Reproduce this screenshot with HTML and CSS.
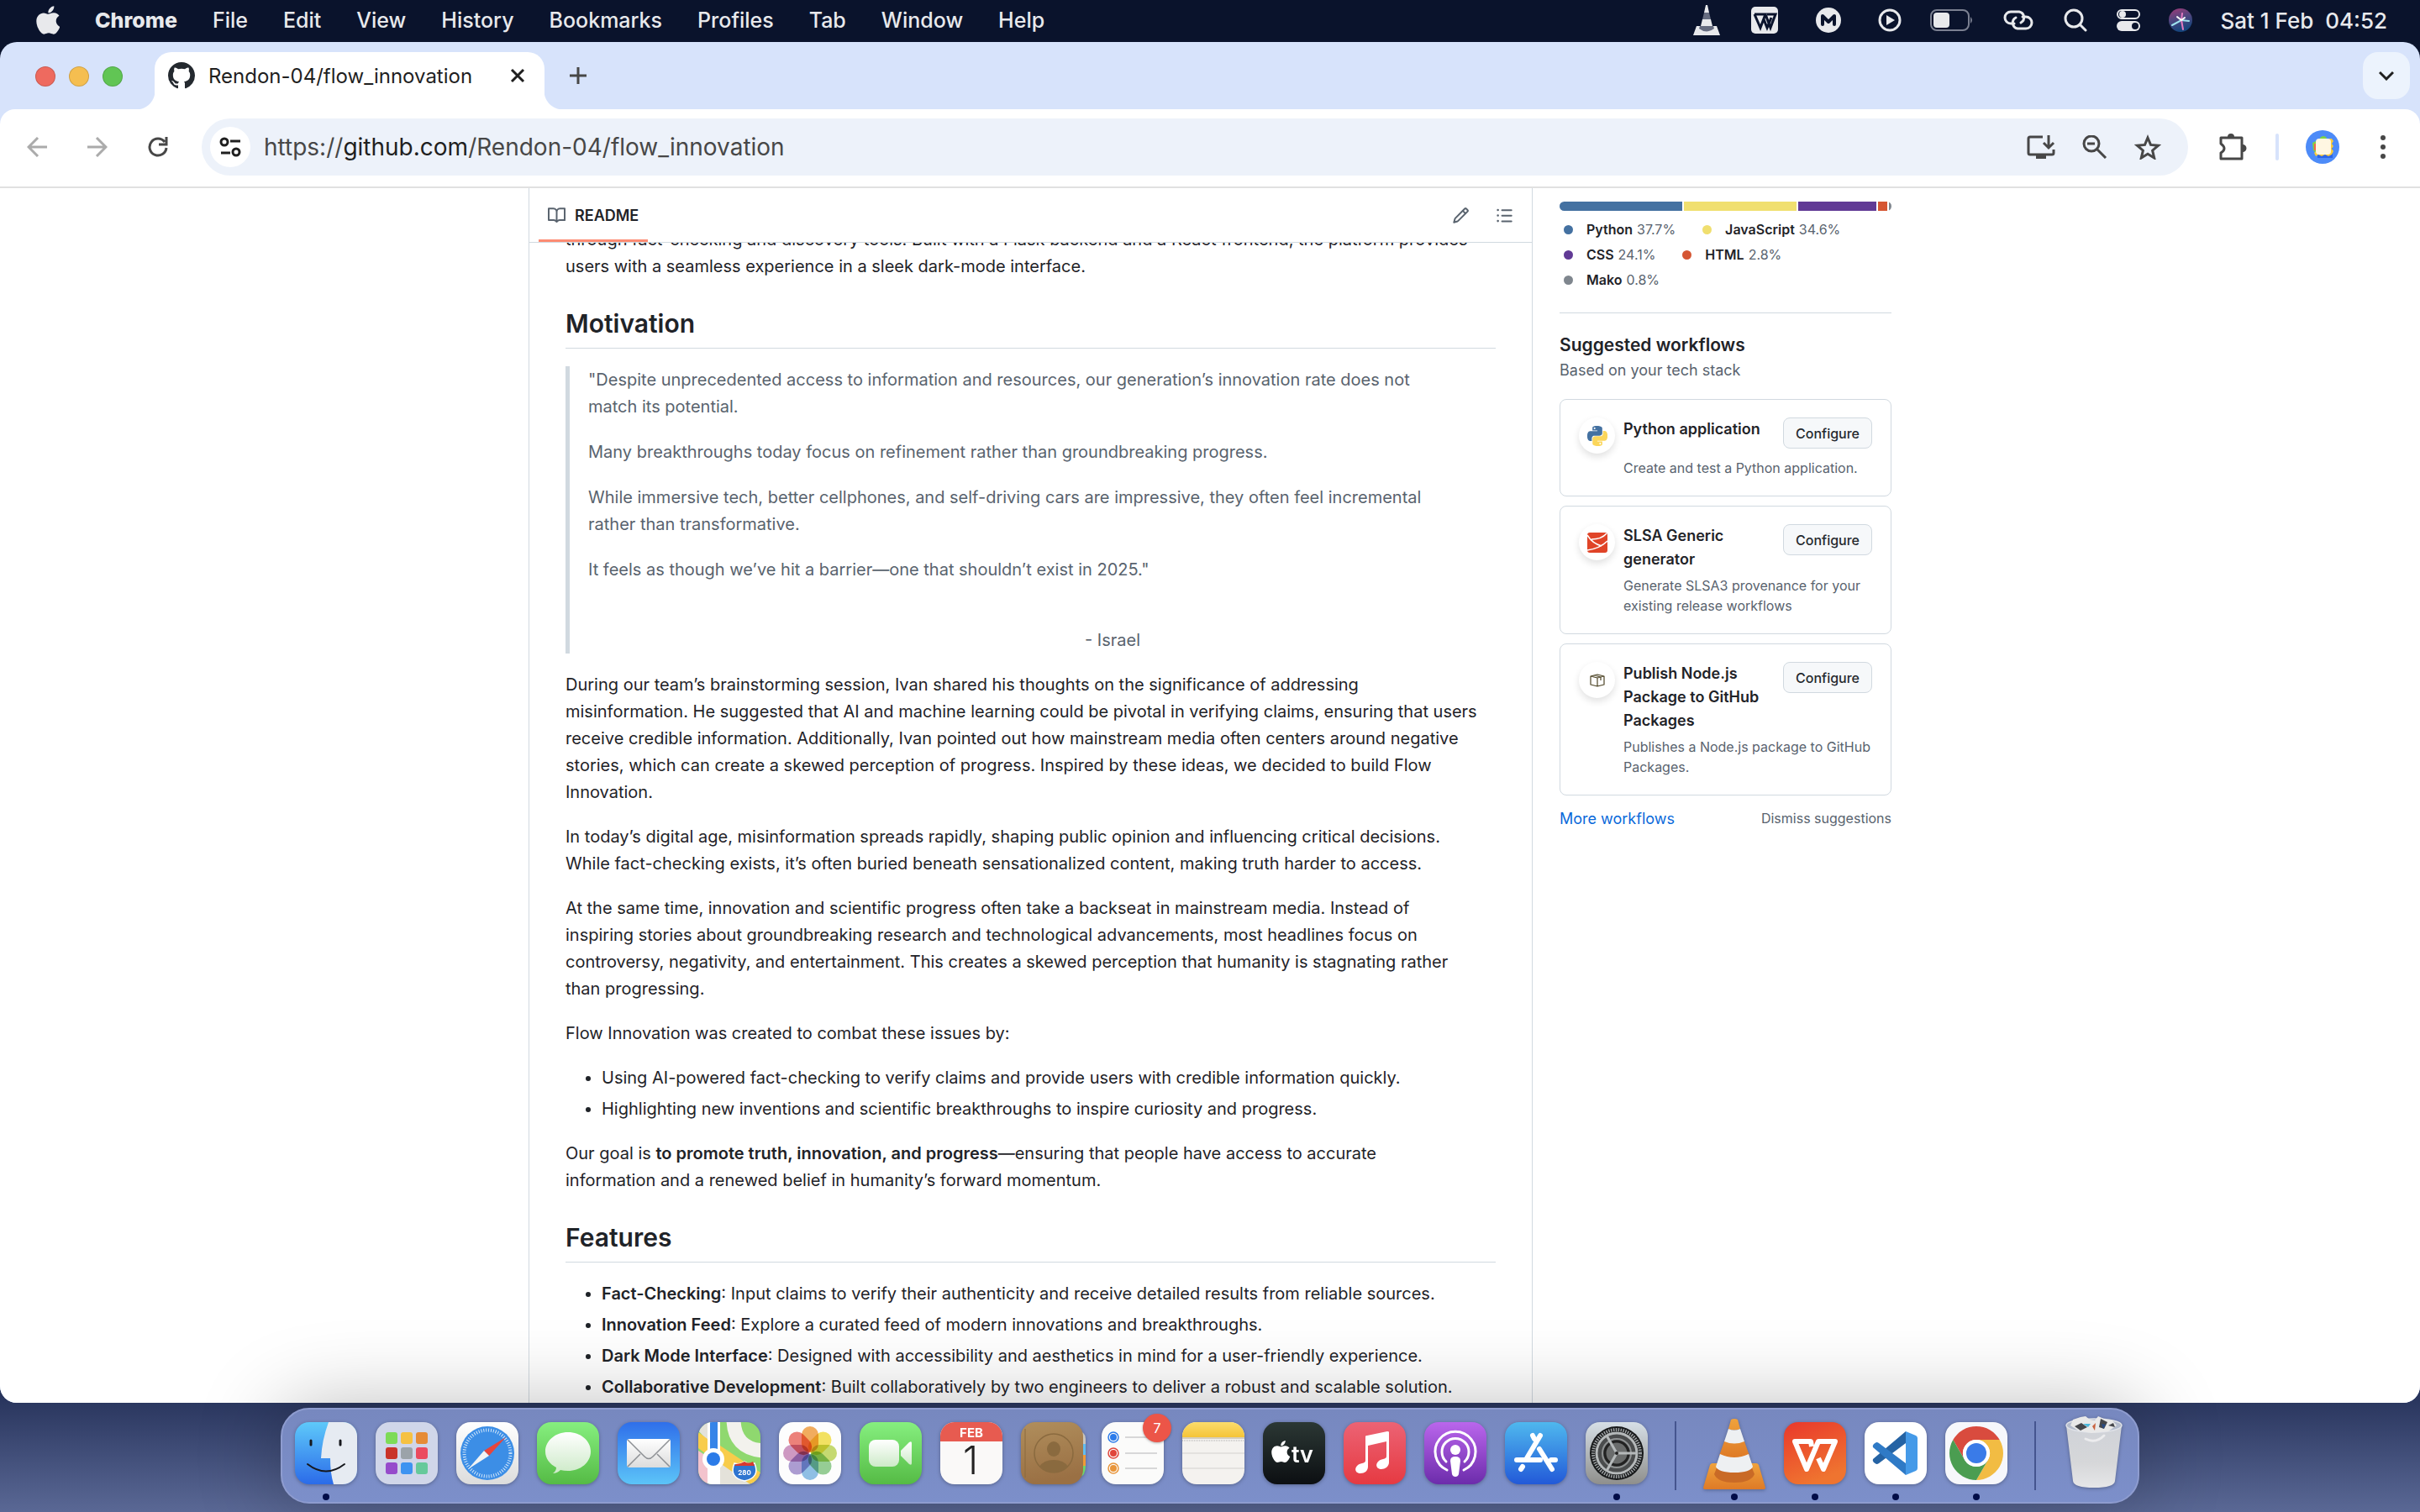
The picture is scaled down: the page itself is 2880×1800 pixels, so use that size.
FILE: index.html
```html
<!DOCTYPE html>
<html lang="en">
<head>
    <meta charset="UTF-8">
    <meta name="viewport" content="width=device-width, initial-scale=1.0">
    <title>Rendon-04/flow_innovation</title>
    <link rel="stylesheet" href="styles.css">
</head>
<body>
    <!-- Menu bar -->
    <header class="menubar">
        <nav class="menus">
            <button class="apple" aria-label="Apple menu">
                <svg width="28" height="36" viewBox="0 24 376 464"><path fill="currentColor" d="M318.7 268.7c-.2-36.7 16.4-64.4 50-84.8-18.8-26.9-47.2-41.7-84.7-44.6-35.5-2.8-74.3 20.7-88.5 20.7-15 0-49.4-19.7-76.4-19.7C63.3 141.2 4 184.8 4 273.5q0 39.3 14.4 81.2c12.8 36.7 59 126.7 107.2 125.2 25.2-.6 43-17.9 75.8-17.9 31.8 0 48.3 17.9 76.4 17.9 48.6-.7 90.4-82.5 102.6-119.3-65.2-30.7-61.7-90-61.7-91.9zm-56.6-164.2c27.3-32.4 24.8-61.9 24-72.5-24.1 1.4-52 16.4-67.9 34.9-17.5 19.8-27.8 44.3-25.6 71.9 26.1 2 49.9-11.4 69.5-34.3z"/></svg>
            </button>
            <button class="app-name">Chrome</button>
            <button>File</button>
            <button>Edit</button>
            <button>View</button>
            <button>History</button>
            <button>Bookmarks</button>
            <button>Profiles</button>
            <button>Tab</button>
            <button>Window</button>
            <button>Help</button>
        </nav>
        <div class="status">
            <svg width="36" height="38" viewBox="0 0 36 38"><path fill="#e8e9ec" d="M17 1h2l2 9h-6zM13 18h10l2 8q-7 4-14 0zM6 26h4q8 8 16 0h4l4 11H2z"/><path fill="#666c80" d="M15 10h6l2 8H13zM10 26h16l1 3q-9 7-18 0z"/></svg>
            <svg width="34" height="34" viewBox="0 0 34 34"><rect x="1" y="1" width="32" height="32" rx="5" fill="#e8e9ec"/><path fill="none" stroke="#0a132c" stroke-width="3" d="M5 10h13l-6 16L5 10M18 10l6 16 6-16H20M16 16l4 10 5-12"/></svg>
            <svg width="50" height="32" viewBox="0 0 50 32"><circle cx="25" cy="16" r="15" fill="#e8e9ec"/><path fill="none" stroke="#0a132c" stroke-width="4" stroke-linejoin="round" stroke-linecap="round" d="M18 21V11l7 7 7-7v10"/></svg>
            <svg width="28" height="28" viewBox="0 0 28 28"><circle cx="14" cy="14" r="12" fill="none" stroke="#e8e9ec" stroke-width="3"/><path fill="#e8e9ec" d="M10 8l10 6-10 6z"/></svg>
            <svg width="52" height="26" viewBox="0 0 52 26"><rect x="1" y="1" width="45" height="24" rx="7" fill="none" stroke="#7b8091" stroke-width="2"/><rect x="4" y="4" width="19" height="18" rx="4" fill="#e8e9ec"/><path fill="#7b8091" d="M48 9q4 4 0 8z"/></svg>
            <svg width="38" height="24" viewBox="0 0 38 24"><g fill="none" stroke="#e8e9ec" stroke-width="3" stroke-linecap="round"><path d="M14 16H10a7 7 0 0 1 0-14h10a7 7 0 0 1 2 13"/><path d="M24 8h4a7 7 0 0 1 0 14H18a7 7 0 0 1-2-13"/></g></svg>
            <svg width="30" height="28" viewBox="0 0 30 28"><g fill="none" stroke="#e8e9ec" stroke-width="3" stroke-linecap="round"><circle cx="13" cy="12" r="10"/><path d="M20 19l7 7"/></g></svg>
            <svg width="28" height="28" viewBox="0 0 28 28"><rect x="1" y="2" width="26" height="10" rx="5" fill="none" stroke="#e8e9ec" stroke-width="2"/><circle cx="7" cy="7" r="4" fill="#e8e9ec"/><rect x="0" y="15" width="28" height="12" rx="6" fill="#e8e9ec"/><circle cx="22" cy="21" r="4" fill="#0a132c"/></svg>
            <svg width="28" height="28" viewBox="0 0 28 28">
                <defs><linearGradient id="siri" x1="0" y1="0" x2="0.3" y2="1"><stop offset="0" stop-color="#a23a78"/><stop offset="0.5" stop-color="#50467f"/><stop offset="1" stop-color="#16457d"/></linearGradient></defs>
                <circle cx="14" cy="14" r="14" fill="url(#siri)"/><g fill="none" stroke-linecap="round" stroke-width="2"><path stroke="#9fe3ef" d="M4 20l11-6 9 1"/><path stroke="#e37ac0" d="M16 6l-1 8 2 11"/><path stroke="#fff" d="M10 10l5 4 4-3"/></g>
            </svg>
            <time class="clock">Sat 1 Feb&nbsp; 04:52</time>
        </div>
    </header>

    <!-- Browser window -->
    <div class="window">
        <div class="tabstrip">
            <div class="lights">
                <button class="light red" aria-label="Close window"></button>
                <button class="light yellow" aria-label="Minimise window"></button>
                <button class="light green" aria-label="Full screen"></button>
            </div>
            <div class="tab">
                <svg width="32" height="32" viewBox="0 0 16 16"><path fill="#24292f" d="M8 0c4.42 0 8 3.58 8 8a8.013 8.013 0 0 1-5.45 7.59c-.4.08-.55-.17-.55-.38 0-.27.01-1.13.01-2.2 0-.75-.25-1.23-.54-1.48 1.78-.2 3.65-.88 3.65-3.95 0-.88-.31-1.59-.82-2.15.08-.2.36-1.02-.08-2.12 0 0-.67-.22-2.2.82-.64-.18-1.32-.27-2-.27-.68 0-1.36.09-2 .27-1.53-1.03-2.2-.82-2.2-.82-.44 1.1-.16 1.92-.08 2.12-.51.56-.82 1.28-.82 2.15 0 3.06 1.86 3.75 3.64 3.95-.23.2-.44.55-.51 1.07-.46.21-1.61.55-2.33-.66-.15-.24-.6-.83-1.23-.82-.67.01-.27.38.01.53.34.19.73.9.82 1.13.16.45.68 1.31 2.69.94 0 .67.01 1.3.01 1.49 0 .21-.15.45-.55.38A7.995 7.995 0 0 1 0 8c0-4.42 3.58-8 8-8Z"/></svg>
                <span class="tab-title">Rendon-04/flow_innovation</span>
                <button class="icon-btn" aria-label="Close tab">
                    <svg width="20" height="20" viewBox="0 0 20 20"><path fill="none" stroke="#1f1f1f" stroke-width="3" d="M3 3l14 14M17 3L3 17"/></svg>
                </button>
            </div>
            <button class="icon-btn new-tab" aria-label="New tab">
                <svg width="20" height="20" viewBox="0 0 20 20"><path fill="none" stroke="#474747" stroke-width="3" d="M10 0v20M0 10h20"/></svg>
            </button>
            <button class="icon-btn tab-search" aria-label="Search tabs">
                <svg width="18" height="12" viewBox="0 0 18 12"><path fill="none" stroke="#1f1f1f" stroke-width="3" d="M1 2l8 8 8-8"/></svg>
            </button>
        </div>

        <div class="toolbar">
            <div class="nav-buttons">
                <button class="icon-btn" aria-label="Back">
                    <svg width="24" height="24" viewBox="0 0 24 24"><path fill="none" stroke="#ababab" stroke-width="3" d="M24 12H2M13 1L2 12l11 11"/></svg>
                </button>
                <button class="icon-btn" aria-label="Forward">
                    <svg width="24" height="24" viewBox="0 0 24 24"><path fill="none" stroke="#ababab" stroke-width="3" d="M0 12h22M11 1l11 11-11 11"/></svg>
                </button>
                <button class="icon-btn" aria-label="Reload">
                    <svg width="24" height="24" viewBox="0 0 24 24"><path fill="none" stroke="#474747" stroke-width="3" d="M22 13A10 10 0 1 1 20 6M22 0v9h-9"/></svg>
                </button>
            </div>
            <div class="omnibox">
                <button class="site-info" aria-label="View site information">
                    <svg width="26" height="24" viewBox="0 0 26 24"><g fill="none" stroke="#1f1f1f" stroke-width="3"><circle cx="6" cy="6" r="4"/><path d="M13 5h12M2 19h11"/><circle cx="20" cy="18" r="4"/></g></svg>
                </button>
                <p class="url">https://<b>github.com</b>/Rendon-04/flow_innovation</p>
                <div class="omnibox-actions">
                    <button class="icon-btn" aria-label="Install">
                        <svg width="34" height="28" viewBox="0 0 34 28"><path fill="none" stroke="#474747" stroke-width="3" d="M19 2H4q-2 0-2 2v17q0 2 2 2h26q2 0 2-2v-4M26 0v13M20 9l6 6 6-6"/><path fill="#474747" d="M11 23h12v5H11z"/></svg>
                    </button>
                    <button class="icon-btn" aria-label="Zoom out">
                        <svg width="30" height="28" viewBox="0 0 30 28"><path fill="none" stroke="#474747" stroke-width="3" d="M17 16l11 11M6 10h9"/><circle cx="11" cy="10" r="9" fill="none" stroke="#474747" stroke-width="3"/></svg>
                    </button>
                    <button class="icon-btn" aria-label="Bookmark this page">
                        <svg width="32" height="30" viewBox="0 0 32 30"><path fill="none" stroke="#474747" stroke-width="3" d="M16 4l3.5 8.4 9 .8-6.9 6 2.1 8.8L16 23.3 8.3 28l2.1-8.8-6.9-6 9-.8z"/></svg>
                    </button>
                </div>
            </div>
            <button class="icon-btn" aria-label="Extensions">
                <svg width="34" height="34" viewBox="0 0 34 34"><path fill="none" stroke="#474747" stroke-width="3" stroke-linejoin="round" d="M3 6h25v25H3v-7q8-5 0-11z"/><path fill="#474747" d="M11 5a4 4 0 0 1 8 0zM29 14a4 4 0 0 1 0 9z"/></svg>
            </button>
            <span class="toolbar-divider"></span>
            <button class="icon-btn avatar" aria-label="Profile">
                <svg width="40" height="40" viewBox="0 0 40 40"><circle cx="20" cy="20" r="20" fill="#4d8bf8"/><path fill="#2c64e8" d="M14 29v4h18V17z"/><path fill="#7ed348" d="M17 9q4-4 8 0l-2 4h-6zM8 15l4-2v14l-3-3z"/><path fill="#f06a4c" d="M10 16h3v8h-3z"/><path fill="#fbcb3a" d="M28 10h3l2 3-2 3 2 3-2 3 2 3-2 4-4 2-4-2-4 2-4-2-3 2-2-4z"/><rect x="12" y="10" width="18" height="19" rx="4" fill="#fff6e2"/></svg>
            </button>
            <button class="icon-btn" aria-label="Browser menu">
                <svg width="8" height="28" viewBox="0 0 8 28"><g fill="#474747"><circle cx="4" cy="3" r="3"/><circle cx="4" cy="14" r="3"/><circle cx="4" cy="25" r="3"/></g></svg>
            </button>
        </div>

        <!-- Repository page -->
        <div class="viewport">
            <div class="repo">
                <main class="readme">
                    <div class="readme-header">
                        <a class="readme-tab" href="#readme">
                            <svg width="21" height="21" viewBox="0 0 16 16"><path fill="#59636e" d="M0 1.75A.75.75 0 0 1 .75 1h4.253c1.227 0 2.317.59 3 1.501A3.743 3.743 0 0 1 11.006 1h4.245a.75.75 0 0 1 .75.75v10.5a.75.75 0 0 1-.75.75h-4.507a2.25 2.25 0 0 0-1.591.659l-.622.621a.75.75 0 0 1-1.06 0l-.622-.621A2.25 2.25 0 0 0 5.258 13H.75a.75.75 0 0 1-.75-.75Zm7.251 10.324.004-5.073-.002-2.253A2.25 2.25 0 0 0 5.003 2.5H1.5v9h3.757a3.75 3.75 0 0 1 1.994.574ZM8.755 4.75l-.004 7.322a3.752 3.752 0 0 1 1.992-.572H14.5v-9h-3.495a2.25 2.25 0 0 0-2.25 2.25Z"/></svg>
                            README
                        </a>
                        <div class="readme-actions">
                            <button class="icon-btn" aria-label="Edit file">
                                <svg width="21" height="21" viewBox="0 0 16 16"><path fill="#59636e" d="M11.013 1.427a1.75 1.75 0 0 1 2.474 0l1.086 1.086a1.75 1.75 0 0 1 0 2.474l-8.61 8.61c-.21.21-.47.364-.756.445l-3.251.93a.75.75 0 0 1-.927-.928l.929-3.25c.081-.286.235-.547.445-.758l8.61-8.61Zm.176 4.823L9.75 4.81l-6.286 6.287a.253.253 0 0 0-.064.108l-.558 1.953 1.953-.558a.253.253 0 0 0 .108-.064Zm1.238-3.763a.25.25 0 0 0-.354 0L10.811 3.75l1.439 1.44 1.263-1.263a.25.25 0 0 0 0-.354Z"/></svg>
                            </button>
                            <button class="icon-btn" aria-label="Outline">
                                <svg width="21" height="21" viewBox="0 0 16 16"><path fill="#59636e" d="M5.75 2.5h8.5a.75.75 0 0 1 0 1.5h-8.5a.75.75 0 0 1 0-1.5Zm0 5h8.5a.75.75 0 0 1 0 1.5h-8.5a.75.75 0 0 1 0-1.5Zm0 5h8.5a.75.75 0 0 1 0 1.5h-8.5a.75.75 0 0 1 0-1.5ZM2 14a1 1 0 1 1 0-2 1 1 0 0 1 0 2Zm1-6a1 1 0 1 1-2 0 1 1 0 0 1 2 0ZM2 4a1 1 0 1 1 0-2 1 1 0 0 1 0 2Z"/></svg>
                            </button>
                        </div>
                    </div>
                    <div class="readme-scroll">
                        <article class="markdown" id="readme">
                            <p>through fact-checking and discovery tools. Built with a Flask backend and a React frontend, the platform provides<br>users with a seamless experience in a sleek dark-mode interface.</p>
                            <h2>Motivation</h2>
                            <blockquote>
                                <p>"Despite unprecedented access to information and resources, our generation’s innovation rate does not<br>match its potential.</p>
                                <p>Many breakthroughs today focus on refinement rather than groundbreaking progress.</p>
                                <p>While immersive tech, better cellphones, and self-driving cars are impressive, they often feel incremental<br>rather than transformative.</p>
                                <p>It feels as though we’ve hit a barrier—one that shouldn’t exist in 2025."</p>
                                <p class="signature">- Israel</p>
                            </blockquote>
                            <p>During our team’s brainstorming session, Ivan shared his thoughts on the significance of addressing<br>misinformation. He suggested that AI and machine learning could be pivotal in verifying claims, ensuring that users<br>receive credible information. Additionally, Ivan pointed out how mainstream media often centers around negative<br>stories, which can create a skewed perception of progress. Inspired by these ideas, we decided to build Flow<br>Innovation.</p>
                            <p>In today’s digital age, misinformation spreads rapidly, shaping public opinion and influencing critical decisions.<br>While fact-checking exists, it’s often buried beneath sensationalized content, making truth harder to access.</p>
                            <p>At the same time, innovation and scientific progress often take a backseat in mainstream media. Instead of<br>inspiring stories about groundbreaking research and technological advancements, most headlines focus on<br>controversy, negativity, and entertainment. This creates a skewed perception that humanity is stagnating rather<br>than progressing.</p>
                            <p>Flow Innovation was created to combat these issues by:</p>
                            <ul>
                                <li>Using AI-powered fact-checking to verify claims and provide users with credible information quickly.</li>
                                <li>Highlighting new inventions and scientific breakthroughs to inspire curiosity and progress.</li>
                            </ul>
                            <p>Our goal is <strong>to promote truth, innovation, and progress</strong>—ensuring that people have access to accurate<br>information and a renewed belief in humanity’s forward momentum.</p>
                            <h2>Features</h2>
                            <ul>
                                <li><strong>Fact-Checking</strong>: Input claims to verify their authenticity and receive detailed results from reliable sources.</li>
                                <li><strong>Innovation Feed</strong>: Explore a curated feed of modern innovations and breakthroughs.</li>
                                <li><strong>Dark Mode Interface</strong>: Designed with accessibility and aesthetics in mind for a user-friendly experience.</li>
                                <li><strong>Collaborative Development</strong>: Built collaboratively by two engineers to deliver a robust and scalable solution.</li>
                            </ul>
                        </article>
                    </div>
                </main>

                <aside class="sidebar">
                    <div class="lang-bar">
                        <span class="python" style="flex-grow: 37.7"></span>
                        <span class="javascript" style="flex-grow: 34.6"></span>
                        <span class="css" style="flex-grow: 24.1"></span>
                        <span class="html" style="flex-grow: 2.8"></span>
                        <span class="mako" style="flex-grow: 0.8"></span>
                    </div>
                    <ul class="lang-list">
                        <li><i class="python"></i><b>Python</b> 37.7%</li>
                        <li><i class="javascript"></i><b>JavaScript</b> 34.6%</li>
                        <li><i class="css"></i><b>CSS</b> 24.1%</li>
                        <li><i class="html"></i><b>HTML</b> 2.8%</li>
                        <li><i class="mako"></i><b>Mako</b> 0.8%</li>
                    </ul>

                    <section class="workflows">
                        <h2>Suggested workflows</h2>
                        <p class="subtitle">Based on your tech stack</p>
                        <div class="workflow">
                            <span class="workflow-icon">
                                <svg width="24" height="24" viewBox="0 0 24 24"><path fill="#4471a1" d="M14.25.18l.9.2.73.26.59.3.45.32.34.34.25.34.16.33.1.3.04.26.02.2-.01.13V8.5l-.05.63-.13.55-.21.46-.26.38-.3.31-.33.25-.35.19-.35.14-.33.1-.3.07-.26.04-.21.02H8.77l-.69.05-.59.14-.5.22-.41.27-.33.32-.27.35-.2.36-.15.37-.1.35-.07.32-.04.27-.02.21v3.06H3.17l-.21-.03-.28-.07-.32-.12-.35-.18-.36-.26-.36-.36-.35-.46-.32-.59-.28-.73-.21-.88-.14-1.05-.05-1.23.06-1.22.16-1.04.24-.87.32-.71.36-.57.4-.44.42-.33.42-.24.4-.16.36-.1.32-.05.24-.01h.16l.06.01h8.16v-.83H6.18l-.01-2.75-.02-.37.05-.34.11-.31.17-.28.25-.26.31-.23.38-.2.44-.18.51-.15.58-.12.64-.1.71-.06.77-.04.84-.02 1.27.05zm-6.3 1.98l-.23.33-.08.41.08.41.23.34.33.22.41.09.41-.09.33-.22.23-.34.08-.41-.08-.41-.23-.33-.33-.22-.41-.09-.41.09z"/><path fill="#fbd65b" d="M21.1 6.11l.28.06.32.12.35.18.36.27.36.35.35.47.32.59.28.73.21.88.14 1.04.05 1.23-.06 1.23-.16 1.04-.24.86-.32.71-.36.57-.4.45-.42.33-.42.24-.4.16-.36.09-.32.05-.24.02-.16-.01h-8.22v.82h5.84l.01 2.76.02.36-.05.34-.11.31-.17.29-.25.25-.31.24-.38.2-.44.17-.51.15-.58.13-.64.09-.71.07-.77.04-.84.01-1.27-.04-1.07-.14-.9-.2-.73-.25-.59-.3-.45-.33-.34-.34-.25-.34-.16-.33-.1-.3-.04-.25-.02-.2.01-.13v-5.34l.05-.64.13-.54.21-.46.26-.38.3-.32.33-.24.35-.2.35-.14.33-.1.3-.06.26-.04.21-.02.13-.01h5.84l.69-.05.59-.14.5-.21.41-.28.33-.32.27-.35.2-.36.15-.36.1-.35.07-.32.04-.28.02-.21V6.07h2.09l.14.01zm-6.47 14.25l-.23.33-.08.41.08.41.23.33.33.23.41.08.41-.08.33-.23.23-.33.08-.41-.08-.41-.23-.33-.33-.23-.41-.08-.41.08z"/></svg>
                            </span>
                            <h3>Python application</h3>
                            <button class="configure">Configure</button>
                            <p>Create and test a Python application.</p>
                        </div>
                        <div class="workflow">
                            <span class="workflow-icon">
                                <svg width="24" height="24" viewBox="0 0 24 24"><rect width="24" height="24" rx="3" fill="#e04428"/><path fill="none" stroke="#fff" stroke-width="1.5" d="M0 3q6 10 17 13M5 8Q17 8 23 1M0 21q15-2 24-11"/></svg>
                            </span>
                            <h3>SLSA Generic generator</h3>
                            <button class="configure">Configure</button>
                            <p>Generate SLSA3 provenance for your existing release workflows</p>
                        </div>
                        <div class="workflow">
                            <span class="workflow-icon">
                                <svg width="18" height="16" viewBox="0 0 18 16"><path fill="none" stroke="#4d4426" stroke-width="1.2" stroke-linejoin="round" d="M1 3l8-2 8 2v10l-8 2-8-2zM1 3l8 2 8-2M9 5v10M5 2l8 2v4"/></svg>
                            </span>
                            <h3>Publish Node.js Package to GitHub Packages</h3>
                            <button class="configure">Configure</button>
                            <p>Publishes a Node.js package to GitHub Packages.</p>
                        </div>
                        <div class="workflow-links">
                            <a href="#more">More workflows</a>
                            <button class="dismiss">Dismiss suggestions</button>
                        </div>
                    </section>
                </aside>
            </div>
        </div>
    </div>

    <!-- Dock -->
    <footer class="dock-area">
        <svg class="defs" width="0" height="0" aria-hidden="true">
            <defs>
                <linearGradient id="blue" x2="0" y2="1"><stop offset="0" stop-color="#5ec9fa"/><stop offset="1" stop-color="#2b6be9"/></linearGradient>
                <linearGradient id="mailblue" x2="0" y2="1"><stop offset="0" stop-color="#2f6fea"/><stop offset="1" stop-color="#5cc4f8"/></linearGradient>
                <linearGradient id="storeblue" x2="0" y2="1"><stop offset="0" stop-color="#4fb8ee"/><stop offset="1" stop-color="#2259d8"/></linearGradient>
                <linearGradient id="green" x2="0" y2="1"><stop offset="0" stop-color="#86ef7f"/><stop offset="1" stop-color="#55bb45"/></linearGradient>
                <linearGradient id="paper" x2="0" y2="1"><stop offset="0" stop-color="#ffffff"/><stop offset="1" stop-color="#dcdcdc"/></linearGradient>
                <linearGradient id="bubble" x2="0" y2="1"><stop offset="0" stop-color="#ffffff"/><stop offset="1" stop-color="#cdeac8"/></linearGradient>
                <linearGradient id="brown" x2="0.2" y2="1"><stop offset="0" stop-color="#b08e5c"/><stop offset="1" stop-color="#9a7044"/></linearGradient>
                <linearGradient id="gold" x2="0" y2="1"><stop offset="0" stop-color="#fbdc6c"/><stop offset="1" stop-color="#f5c437"/></linearGradient>
                <linearGradient id="black" x2="0" y2="1"><stop offset="0" stop-color="#2b3734"/><stop offset="1" stop-color="#0c0f12"/></linearGradient>
                <linearGradient id="music" x2="0" y2="1"><stop offset="0" stop-color="#ec6374"/><stop offset="1" stop-color="#e63a42"/></linearGradient>
                <linearGradient id="purple" x2="0" y2="1"><stop offset="0" stop-color="#ba66ec"/><stop offset="1" stop-color="#6c2cab"/></linearGradient>
                <linearGradient id="steel" x2="0" y2="1"><stop offset="0" stop-color="#d6dfe6"/><stop offset="1" stop-color="#8f8f8c"/></linearGradient>
                <linearGradient id="wps" x2="0.4" y2="1"><stop offset="0" stop-color="#e9382b"/><stop offset="1" stop-color="#ef7430"/></linearGradient>
                <linearGradient id="cone" x2="0" y2="1"><stop offset="0" stop-color="#f0a23c"/><stop offset="1" stop-color="#de7a26"/></linearGradient>
                <linearGradient id="bin" x2="0" y2="1"><stop offset="0" stop-color="#cfd2d8"/><stop offset="0.6" stop-color="#d6d7d9"/><stop offset="1" stop-color="#e6e6e8"/></linearGradient>
                <clipPath id="tile"><rect width="74" height="74" rx="17"/></clipPath>
            </defs>
        </svg>
        <nav class="dock">
            <button class="dock-item running" aria-label="Finder">
                <svg viewBox="0 0 74 74"><g clip-path="url(#tile)"><path fill="url(#blue)" d="M0 0h74v74H0z"/><path fill="#e6ebf2" d="M40 0Q32 22 31 43h11q0 18 4 31h28V0z"/></g><path fill="none" stroke="#16181d" stroke-width="3" stroke-linecap="round" d="M19 22v5M54 22v5"/><path fill="none" stroke="#16181d" stroke-width="2" stroke-linecap="round" d="M15 50q22 17 44 0"/></svg>
            </button>
            <button class="dock-item" aria-label="Launchpad">
                <svg viewBox="0 0 74 74"><rect width="74" height="74" rx="17" fill="#d0d6e9"/><rect x="12" y="12" width="14" height="14" rx="3" fill="#7ddb57"/><rect x="30" y="12" width="14" height="14" rx="3" fill="#f6c142"/><rect x="48" y="12" width="14" height="14" rx="3" fill="#e68b36"/><rect x="12" y="30" width="14" height="14" rx="3" fill="#c9332a"/><rect x="30" y="30" width="14" height="14" rx="3" fill="#9ba3a9"/><rect x="48" y="30" width="14" height="14" rx="3" fill="#eb4a5f"/><rect x="12" y="48" width="14" height="14" rx="3" fill="#964bcb"/><rect x="30" y="48" width="14" height="14" rx="3" fill="#3d93f1"/><rect x="48" y="48" width="14" height="14" rx="3" fill="#66c99b"/></svg>
            </button>
            <button class="dock-item" aria-label="Safari">
                <svg viewBox="0 0 74 74"><rect width="74" height="74" rx="17" fill="url(#paper)"/><circle cx="37" cy="37" r="32" fill="#3c8ee6"/><circle cx="37" cy="37" r="27.5" fill="none" stroke="#d5e8fa" stroke-width="4" stroke-dasharray="1 1.9"/><path fill="#e8453c" d="M59 18L33 34l6 6z"/><path fill="#f1f3f5" d="M14 56l19-22 6 6z"/></svg>
            </button>
            <button class="dock-item" aria-label="Messages">
                <svg viewBox="0 0 74 74"><rect width="74" height="74" rx="17" fill="url(#green)"/><path fill="url(#bubble)" d="M37 12c15 0 27 10 27 23S52 58 37 58q-5 0-9-1-4 4-9 4 4-3 4-7C15 50 10 43 10 35c0-13 12-23 27-23z"/></svg>
            </button>
            <button class="dock-item" aria-label="Mail">
                <svg viewBox="0 0 74 74"><rect width="74" height="74" rx="17" fill="url(#mailblue)"/><rect x="11" y="20" width="52" height="34" rx="3" fill="url(#paper)"/><path fill="none" stroke="#8d9094" stroke-width="1.5" d="M12 21l20 20q5 5 10 0l20-20M12 53l15-15M62 53L47 38"/></svg>
            </button>
            <button class="dock-item" aria-label="Maps">
                <svg viewBox="0 0 74 74"><g clip-path="url(#tile)"><path fill="#8fd86f" d="M0 0h74v74H0z"/><path fill="#e4e2da" d="M0 0h11v22L0 10zM26 40l48 36H26z"/><path fill="#f3c3cd" d="M0 34l11 7v33H0z"/><path fill="#f8cc4b" d="M0 12l11 8v19L0 31zM26 28l48 32v16l-12-2-36-25z"/><path fill="none" stroke="#f3f2ed" stroke-width="17" d="M42-4Q42 32 78 34"/><path fill="#fff" d="M11 0h15v74H11z"/><path fill="#3584e8" d="M14 0h9v40h-9z"/></g><circle cx="18" cy="44" r="13" fill="#fff"/><circle cx="18" cy="44" r="8" fill="#2b7be8"/><path fill="#2f75d0" stroke="#fff" stroke-width="1.5" d="M43 49q6 2 12-2 6 4 12 2 7 17-12 21-19-4-12-21z"/><path fill="#d8392f" d="M45 50q5 0 10-3 5 3 10 0l2 5H43z"/><text x="55" y="63" class="shield-text">280</text></svg>
            </button>
            <button class="dock-item" aria-label="Photos">
                <svg viewBox="0 0 74 74"><rect width="74" height="74" rx="17" fill="#fdfdfd"/><g class="petals"><rect x="27" y="5" width="20" height="31" rx="10" fill="#f09a37"/><rect x="27" y="5" width="20" height="31" rx="10" fill="#f2dc3c" transform="rotate(45 37 37)"/><rect x="27" y="5" width="20" height="31" rx="10" fill="#b9d24e" transform="rotate(90 37 37)"/><rect x="27" y="5" width="20" height="31" rx="10" fill="#7dc37b" transform="rotate(135 37 37)"/><rect x="27" y="5" width="20" height="31" rx="10" fill="#74b1e0" transform="rotate(180 37 37)"/><rect x="27" y="5" width="20" height="31" rx="10" fill="#9a84c8" transform="rotate(225 37 37)"/><rect x="27" y="5" width="20" height="31" rx="10" fill="#c581b5" transform="rotate(270 37 37)"/><rect x="27" y="5" width="20" height="31" rx="10" fill="#ea625a" transform="rotate(315 37 37)"/></g></svg>
            </button>
            <button class="dock-item" aria-label="FaceTime">
                <svg viewBox="0 0 74 74"><rect width="74" height="74" rx="17" fill="url(#green)"/><rect x="11" y="21" width="36" height="32" rx="8" fill="url(#bubble)"/><path fill="url(#bubble)" d="M49 34l10-10q3-2 3 1v24q0 3-3 1L49 40z"/></svg>
            </button>
            <button class="dock-item" aria-label="Calendar">
                <svg viewBox="0 0 74 74"><g clip-path="url(#tile)"><path fill="#faf9f8" d="M0 0h74v74H0z"/><path fill="#e75b50" d="M0 0h74v23H0z"/></g><text x="37" y="18" class="cal-month">FEB</text><text x="36" y="62" class="cal-day">1</text></svg>
            </button>
            <button class="dock-item" aria-label="Contacts">
                <svg viewBox="0 0 74 74"><path fill="#c9c5bc" d="M66 10q11 1 11 10v6H66z"/><path fill="#62bdf0" d="M66 26h11v13H66z"/><path fill="#f09a37" d="M66 39h11v13H66z"/><path fill="#6fd66a" d="M66 52h11q0 12-8 14z"/><rect width="74" height="74" rx="17" fill="url(#brown)"/><path fill="none" stroke="#8a6a3f" d="M5 8v58"/><circle cx="39" cy="37" r="23" fill="none" stroke="#8a6a3f" stroke-width="1.5"/><ellipse cx="39" cy="32" rx="8" ry="9" fill="#8a6a3f"/><path fill="#8a6a3f" d="M22 53q5-8 17-8t17 8q-7 7-17 7t-17-7z"/></svg>
            </button>
            <button class="dock-item" aria-label="Reminders, 7 due">
                <svg viewBox="0 0 74 74"><rect width="74" height="74" rx="17" fill="#fbfbfa"/><path stroke="#b4b4b6" d="M28 18h38M28 37h38M28 55h38"/><g fill="none" stroke-width="1.5"><circle cx="14" cy="18" r="6" stroke="#2b7bea"/><circle cx="14" cy="37" r="6" stroke="#e0453b"/><circle cx="14" cy="55" r="6" stroke="#e8953a"/></g><circle cx="14" cy="18" r="4" fill="#2b7bea"/><circle cx="14" cy="37" r="4" fill="#e0453b"/><circle cx="14" cy="55" r="4" fill="#e8953a"/></svg>
                <span class="badge">7</span>
            </button>
            <button class="dock-item" aria-label="Notes">
                <svg viewBox="0 0 74 74"><g clip-path="url(#tile)"><path fill="#f4f2ef" d="M0 0h74v74H0z"/><path fill="url(#gold)" d="M0 0h74v18H0z"/><path stroke="#b5a98a" d="M0 19h74"/><path stroke="#aaa" stroke-dasharray="1 1" d="M0 22h74"/><path stroke="#d3d1ce" d="M0 37h74M0 55h74"/></g></svg>
            </button>
            <button class="dock-item" aria-label="TV">
                <svg viewBox="0 0 74 74"><rect width="74" height="74" rx="17" fill="url(#black)"/><svg x="10" y="21" width="22" height="28" viewBox="0 24 376 464"><path fill="#fff" d="M318.7 268.7c-.2-36.7 16.4-64.4 50-84.8-18.8-26.9-47.2-41.7-84.7-44.6-35.5-2.8-74.3 20.7-88.5 20.7-15 0-49.4-19.7-76.4-19.7C63.3 141.2 4 184.8 4 273.5q0 39.3 14.4 81.2c12.8 36.7 59 126.7 107.2 125.2 25.2-.6 43-17.9 75.8-17.9 31.8 0 48.3 17.9 76.4 17.9 48.6-.7 90.4-82.5 102.6-119.3-65.2-30.7-61.7-90-61.7-91.9zm-56.6-164.2c27.3-32.4 24.8-61.9 24-72.5-24.1 1.4-52 16.4-67.9 34.9-17.5 19.8-27.8 44.3-25.6 71.9 26.1 2 49.9-11.4 69.5-34.3z"/></svg><text x="34" y="48" class="tv-text">tv</text></svg>
            </button>
            <button class="dock-item" aria-label="Music">
                <svg viewBox="0 0 74 74"><rect width="74" height="74" rx="17" fill="url(#music)"/><path fill="#fff" d="M26 17q0-1 2-1l24-5q2 0 2 1v36c0 5-5 8-9 8-8 0-8-10 2-12 3-1 4-1 4-4V23l-22 5v25c0 5-4 8-9 8-8 0-8-10 2-12 3-1 4-1 4-4z"/></svg>
            </button>
            <button class="dock-item" aria-label="Podcasts">
                <svg viewBox="0 0 74 74"><rect width="74" height="74" rx="17" fill="url(#purple)"/><g fill="none" stroke="#fff" stroke-width="3" stroke-linecap="round"><path d="M27 57a24 24 0 1 1 20 0"/><path d="M26 47a16 16 0 1 1 22 0"/></g><circle cx="37" cy="33" r="6" fill="#fff"/><path fill="#fff" d="M31 46q0-5 6-5t6 5l-2 16q-1 3-4 3t-4-3z"/></svg>
            </button>
            <button class="dock-item" aria-label="App Store">
                <svg viewBox="0 0 74 74"><rect width="74" height="74" rx="17" fill="url(#storeblue)"/><g fill="none" stroke="#fff" stroke-width="6" stroke-linecap="round"><path d="M33 16l2 4M42 16L26 43M14 45h28M55 45h5M41 32l15 24M21 53l-2 3"/></g></svg>
            </button>
            <button class="dock-item running" aria-label="System Settings">
                <svg viewBox="0 0 74 74"><rect width="74" height="74" rx="17" fill="url(#steel)"/><circle cx="37" cy="37" r="32" fill="#17191a"/><circle cx="37" cy="37" r="28" fill="none" stroke="#9fa3a5" stroke-width="4" stroke-dasharray="1.5 1.4"/><circle cx="37" cy="37" r="24" fill="#4a4c4d" stroke="#b5b9ba" stroke-width="3"/><circle cx="37" cy="37" r="17" fill="none" stroke="#8e9192" stroke-width="2"/><circle cx="37" cy="37" r="14" fill="#6a6c6c" stroke="#222" stroke-width="3"/><path fill="none" stroke="#b5b9ba" stroke-width="3" d="M37 37h24M37 37L25 16M37 37L25 58"/><circle cx="37" cy="37" r="2" fill="#222"/></svg>
            </button>
            <span class="dock-separator"></span>
            <button class="dock-item running" aria-label="VLC">
                <svg viewBox="0 0 74 74"><path fill="url(#cone)" d="M11 49h52q2 0 3 2l8 27q0 2-2 2H2q-2 0-2-2l8-27q1-2 3-2z"/><path fill="#c96a26" d="M13 62l4-10h40l4 10q-4 10-24 10T13 62z"/><path fill="url(#cone)" d="M33-3q4-2 8 0l3 11q-7 3-14 0zM25 23h24l6 17q-18 6-36 0z"/><path fill="#eef0f2" d="M30 8q7 3 14 0l5 15q-12 5-24 0zM20 38q17 8 34 0l5 15q-3 7-22 7t-22-7z"/></svg>
            </button>
            <button class="dock-item running" aria-label="WPS Office">
                <svg viewBox="0 0 74 74"><rect width="74" height="74" rx="17" fill="url(#wps)"/><path fill="none" stroke="#fff" stroke-width="6" stroke-linejoin="round" d="M33 29l-1-6H13l14 33L41 23h20L47 56l-6-13"/></svg>
            </button>
            <button class="dock-item running" aria-label="Visual Studio Code">
                <svg viewBox="0 0 74 74"><rect width="74" height="74" rx="17" fill="#fff"/><path fill="#2563a4" d="M49 11L10 44q-1 2 1 4l3 2q2 0 3-1l32-24z"/><path fill="#2f7ac6" d="M49 63L10 30q-1-2 1-4l3-2q2 0 3 1l32 24z"/><path fill="#459ae8" d="M49 11l12 5q2 1 2 3v36q0 2-2 3l-12 5z"/></svg>
            </button>
            <button class="dock-item running" aria-label="Google Chrome">
                <svg viewBox="0 0 74 74"><rect width="74" height="74" rx="17" fill="#f6f7fb"/><path fill="#d94b3e" d="M9.3 21A32 32 0 0 1 64.7 21H37A16 16 0 0 0 23.1 45z"/><path fill="#f2bc43" d="M64.7 21A32 32 0 0 1 37 69L50.9 45A16 16 0 0 0 37 21z"/><path fill="#4b9d51" d="M37 69A32 32 0 0 1 9.3 21L23.1 45A16 16 0 0 0 50.9 45z"/><circle cx="37" cy="37" r="16" fill="#fff"/><circle cx="37" cy="37" r="12" fill="#3a7be8"/></svg>
            </button>
            <span class="dock-separator"></span>
            <button class="dock-item" aria-label="Bin">
                <svg viewBox="0 0 74 74"><path fill="url(#bin)" d="M4 4q33 14 66 0l-8 66q-1 8-25 8t-25-8z"/><ellipse cx="37" cy="4" rx="33" ry="8" fill="#b4bccd" stroke="#dfe2e8" stroke-width="1.5"/><path fill="#e9e9e9" d="M9 4l3-7 9-3 6-1 5 4 6 1 4-5 9 4 8 1 5 6-10 7-20 2-16-3z"/><path fill="#45474c" d="M14 5l8-4 7 5-8 4zM45-4l8 4-4 8-6-2zM54 4l6-3 2 5z"/><path fill="#4bb8dc" d="M24 2l9 0-3 4z"/><path fill="#c8613e" d="M35 5l4-4-1 9z"/><path fill="#274a86" d="M46 2l5 1-3 5z"/><path fill="none" stroke="#ececee" stroke-width="3" stroke-linecap="round" d="M27 20q12 6 22-4"/></svg>
            </button>
        </nav>
    </footer>
</body>
</html>
```
FILE: styles.css
```css
:root {
    --text: #1f2328;
    --muted: #59636e;
    --border: #d1d9e0;
    --link: #0969da;
    --tabstrip: #d7e3fb;
    --menubar: #0a132c;
}

* {
    margin: 0;
    padding: 0;
    box-sizing: border-box;
}

body {
    display: flex;
    flex-direction: column;
    height: 100vh;
    overflow: hidden;
    font-family: Inter, "Liberation Sans", sans-serif;
    color: var(--text);
    background: linear-gradient(to bottom, var(--menubar) 0, #121b38 80%, #26325a 92%, #5a6895 100%);
}

button {
    border: none;
    background: none;
    font: inherit;
    color: inherit;
    cursor: pointer;
}

a {
    text-decoration: none;
}

svg {
    display: block;
    flex-shrink: 0;
}

/* Menu bar */
.menubar {
    display: flex;
    justify-content: space-between;
    height: 50px;
    padding: 0 39px 2px 43px;
    background: var(--menubar);
    color: #e8e9ec;
    font-size: 25px;
}

.menus {
    display: flex;
    align-items: center;
    gap: 42px;
    font-weight: 500;
}

.menus .app-name {
    font-weight: 800;
}

.status {
    display: flex;
    align-items: center;
    gap: 34px;
    font-weight: 500;
}

.clock {
    font-size: 26px;
}

/* Window and tabs */
.window {
    display: flex;
    flex-direction: column;
    flex: 1;
    min-height: 0;
    border-radius: 20px;
    overflow: hidden;
    background: var(--tabstrip);
}

.tabstrip {
    display: flex;
    align-items: center;
    height: 80px;
    padding: 12px 12px 0 42px;
}

.lights {
    display: flex;
    gap: 16px;
    margin-right: 38px;
    padding-bottom: 10px;
}

.light {
    width: 24px;
    height: 24px;
    border-radius: 50%;
    border: 1px solid rgba(0, 0, 0, 0.15);
}

.light.red { background: #ee6a5f; }
.light.yellow { background: #f5be50; }
.light.green { background: #61c554; }

.tab {
    position: relative;
    display: flex;
    align-items: center;
    align-self: stretch;
    width: 464px;
    padding: 0 22px 12px 16px;
    border-radius: 20px 20px 0 0;
    background: #fff;
    font-size: 24px;
    color: #1f1f1f;
}

/* Flared feet on both sides of the active tab */
.tab::before,
.tab::after {
    content: "";
    position: absolute;
    bottom: 0;
    width: 22px;
    height: 22px;
}

.tab::before {
    right: 100%;
    background: radial-gradient(circle at 0 0, var(--tabstrip) 22px, #fff 23px);
}

.tab::after {
    left: 100%;
    background: radial-gradient(circle at 100% 0, var(--tabstrip) 22px, #fff 23px);
}

.tab-title {
    flex: 1;
    margin-left: 16px;
}

.icon-btn {
    display: flex;
    align-items: center;
    justify-content: center;
}

.new-tab {
    margin: 0 auto 12px 30px;
}

.tab-search {
    align-self: flex-start;
    width: 56px;
    height: 56px;
    border-radius: 18px;
    background: #ecf3fd;
}

/* Toolbar */
.toolbar {
    display: flex;
    align-items: center;
    height: 94px;
    padding: 0 40px 2px 32px;
    border-bottom: 2px solid #e1e1e1;
    border-radius: 18px 18px 0 0;
    background: #fff;
}

.nav-buttons {
    display: flex;
    gap: 48px;
    margin-right: 40px;
}

.omnibox {
    display: flex;
    align-items: center;
    flex: 1;
    height: 68px;
    margin-right: 36px;
    padding: 0 32px 0 10px;
    border-radius: 34px;
    background: #edf2fa;
}

.site-info {
    display: grid;
    place-items: center;
    width: 48px;
    height: 48px;
    border-radius: 50%;
    background: #fff;
}

.url {
    flex: 1;
    margin-left: 16px;
    font-size: 28px;
    color: #474747;
}

.url b {
    font-weight: 400;
    color: #1f1f1f;
}

.omnibox-actions {
    display: flex;
    gap: 32px;
}

.toolbar-divider {
    width: 4px;
    height: 32px;
    margin: 0 32px 0 34px;
    border-radius: 2px;
    background: var(--tabstrip);
}

.avatar {
    margin-right: 48px;
}

/* Page */
.viewport {
    flex: 1;
    min-height: 0;
    overflow: hidden;
    background: #fff;
}

.repo {
    display: grid;
    grid-template-columns: minmax(0, 1fr) 395px;
    gap: 32px;
    max-width: 1622px;
    height: 100%;
    margin: 0 auto;
}

.readme {
    display: flex;
    flex-direction: column;
    min-height: 0;
    border: solid var(--border);
    border-width: 0 1px;
}

.readme-header {
    display: flex;
    justify-content: space-between;
    height: 65px;
    padding: 0 22px 0 11px;
    border-bottom: 1px solid var(--border);
}

.readme-tab {
    display: flex;
    align-items: center;
    gap: 11px;
    padding: 3px 11px 0;
    border-bottom: 3px solid #fd8c73;
    font-size: 18px;
    font-weight: 600;
    color: var(--text);
}

.readme-actions {
    display: flex;
    align-items: center;
    gap: 31px;
}

.readme-scroll {
    flex: 1;
    min-height: 0;
    overflow: hidden;
}

.markdown {
    margin-top: -20px;
    padding: 0 43px;
    font-size: 20px;
    line-height: 32px;
    white-space: nowrap;
}

.markdown p,
.markdown ul,
.markdown blockquote {
    margin-bottom: 21px;
}

.markdown h2 {
    margin: 32px 0 21px;
    padding-bottom: 9px;
    border-bottom: 1px solid var(--border);
    font-size: 30px;
    line-height: 40px;
    font-weight: 600;
}

.markdown strong {
    font-weight: 600;
}

.markdown blockquote {
    padding: 0 22px;
    border-left: 5px solid var(--border);
    color: var(--muted);
}

.markdown blockquote p {
    margin-bottom: 22px;
}

.markdown blockquote .signature {
    margin: 52px 0 0;
    padding-left: 190px;
    text-align: center;
}

.markdown ul {
    padding-left: 43px;
}

.markdown li + li {
    margin-top: 5px;
}

/* Sidebar */
.sidebar {
    padding-top: 16px;
    font-size: 16px;
    color: var(--muted);
}

.lang-bar {
    display: flex;
    gap: 2px;
    height: 11px;
    border-radius: 6px;
    overflow: hidden;
}

.python { background: #4471a1; }
.javascript { background: #f0df6f; }
.css { background: #613a95; }
.html { background: #d55633; }
.mako { background: #7f868e; }

.lang-list {
    display: flex;
    flex-wrap: wrap;
    column-gap: 32px;
    padding: 7px 5px 24px;
    border-bottom: 1px solid var(--border);
    list-style: none;
    line-height: 30px;
}

.lang-list li {
    display: flex;
    align-items: center;
    gap: 5px;
}

.lang-list i {
    width: 11px;
    height: 11px;
    margin-right: 11px;
    border-radius: 50%;
}

.lang-list b {
    font-weight: 600;
    color: var(--text);
}

.workflows h2 {
    margin-top: 22px;
    font-size: 21px;
    line-height: 32px;
    font-weight: 600;
    color: var(--text);
}

.subtitle {
    margin-bottom: 20px;
    font-size: 18px;
    line-height: 28px;
}

.workflow {
    display: grid;
    grid-template-columns: 43px 1fr auto;
    column-gap: 10px;
    margin-bottom: 11px;
    padding: 21px 22px;
    border: 1px solid var(--border);
    border-radius: 8px;
}

.workflow-icon {
    display: grid;
    place-items: center;
    width: 43px;
    height: 43px;
    border-radius: 50%;
    box-shadow: 0 4px 8px rgba(0, 0, 0, 0.12);
}

.workflow h3 {
    font-size: 18px;
    line-height: 28px;
    font-weight: 600;
    color: var(--text);
}

.workflow p {
    grid-column: 2 / 4;
    margin-top: 5px;
    line-height: 24px;
}

.configure {
    align-self: start;
    height: 37px;
    padding: 0 14px;
    border: 1px solid var(--border);
    border-radius: 8px;
    background: #f6f8fa;
    font-weight: 500;
    color: #25292e;
}

.workflow-links {
    display: flex;
    align-items: center;
    justify-content: space-between;
    height: 32px;
}

.workflow-links a {
    font-size: 18px;
    color: var(--link);
}

/* Dock */
.dock-area {
    display: flex;
    justify-content: center;
    padding: 6px 0 10px;
}

.defs {
    position: absolute;
}

.dock {
    position: relative;
    display: flex;
    height: 114px;
    padding: 0 4px;
    border: 2px solid #8e9ccf;
    border-radius: 34px;
    background: linear-gradient(#7788bf, #7c8fca);
    box-shadow: 0 0 100px rgba(0, 0, 0, 0.28);
}

.dock-item {
    position: relative;
    display: flex;
    flex-direction: column;
    align-items: center;
    width: 96px;
    padding-top: 15px;
}

.dock-item svg {
    width: 74px;
    height: 74px;
    overflow: visible;
    filter: drop-shadow(0 1px 2px rgba(0, 0, 0, 0.3));
}

.dock-item svg svg {
    width: 22px;
    height: 28px;
    filter: none;
}

.running::after {
    content: "";
    width: 8px;
    height: 8px;
    margin-top: 11px;
    border-radius: 50%;
    background: #020d48;
}

.dock-separator {
    align-self: center;
    width: 2px;
    height: 82px;
    margin: 0 21px;
    background: #45558f;
}

.badge {
    position: absolute;
    top: 5px;
    right: 2px;
    width: 34px;
    height: 34px;
    border-radius: 50%;
    background: #ec5548;
    font-size: 16px;
    line-height: 34px;
    color: #fff;
    box-shadow: 0 1px 3px rgba(0, 0, 0, 0.3);
}

.petals rect {
    mix-blend-mode: multiply;
    opacity: 0.8;
}

.shield-text {
    font-size: 8px;
    font-weight: 700;
    fill: #fff;
    text-anchor: middle;
}

.cal-month {
    font-size: 15px;
    font-weight: 700;
    fill: #fff;
    text-anchor: middle;
}

.cal-day {
    font-size: 46px;
    font-weight: 300;
    fill: #222;
    text-anchor: middle;
}

.tv-text {
    font-size: 27px;
    font-weight: 600;
    fill: #fff;
}
```
